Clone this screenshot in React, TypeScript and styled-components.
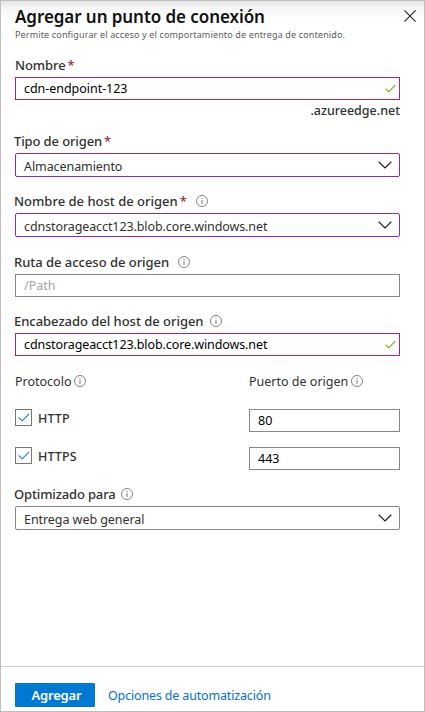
import React from 'react';
import styled, { createGlobalStyle } from 'styled-components';

const Global = createGlobalStyle`
  * { box-sizing: border-box; }
  body { margin: 0; background: #fff; font-family: "Noto Sans", "Open Sans", sans-serif; color: #323130; }
  button, input { font-family: inherit; }
`;

const Panel = styled.div`
  width: 425px;
  height: 712px;
  display: flex;
  flex-direction: column;
  border: 1px solid #bfbfbf;
  background: linear-gradient(#e6e6e6 0, #f5f5f5 7px, #fff 18px);
`;

const Header = styled.header`
  display: flex;
  justify-content: space-between;
  padding: 4px 8px 0 14px;
  height: 40px;
`;

const Title = styled.h1`
  margin: 0;
  font-size: 17px;
  font-weight: 600;
  line-height: 24px;
  letter-spacing: -0.07px;
  color: #111;
  white-space: nowrap;
`;

const Subtitle = styled.p`
  margin: 0;
  font-size: 9px;
  line-height: 12px;
  letter-spacing: 0.15px;
  color: #5c5c5c;
  white-space: nowrap;
`;

const CloseButton = styled.button`
  width: 12px;
  height: 12px;
  margin-top: 5px;
  padding: 0;
  border: 0;
  background: none;
  svg { display: block; }
`;

const Form = styled.main`
  flex: 1;
  padding: 14px 24px 0 14px;
`;

const Field = styled.section<{ $top?: number }>`
  margin-top: ${p => p.$top ?? 0}px;
`;

const Label = styled.div<{ $shift?: number; $spacing?: number }>`
  display: flex;
  align-items: center;
  height: 20px;
  margin-left: ${p => p.$shift ?? -1}px;
  font-size: 13px;
  font-weight: 500;
  line-height: 20px;
  letter-spacing: ${p => p.$spacing ?? 0}px;
  white-space: nowrap;
`;

const Required = styled.span`
  margin-left: 2px;
  color: #a4262c;
`;

const InfoSvg = styled.svg<{ $gap: number }>`
  flex: none;
  margin-left: ${p => p.$gap}px;
`;

const Control = styled.div<{ $accent?: boolean; $select?: boolean }>`
  display: flex;
  align-items: center;
  justify-content: space-between;
  height: ${p => (p.$select ? 24 : 23)}px;
  margin-top: 2px;
  padding: 0 ${p => (p.$select ? 7 : 3)}px 0 8px;
  border: 1px solid ${p => (p.$accent ? '#8a2da5' : '#8a8886')};
  border-radius: ${p => (p.$select ? 2 : 0)}px;
  background: #fff;
`;

const Value = styled.span<{ $select?: boolean; $spacing?: number }>`
  margin-top: ${p => (p.$select ? 3 : 0)}px;
  font-size: 12.5px;
  line-height: 20px;
  letter-spacing: ${p => p.$spacing ?? 0}px;
  color: ${p => (p.$select ? '#323130' : '#000')};
  white-space: nowrap;
`;

const TextInput = styled.input`
  width: 100%;
  height: 21px;
  padding: 0;
  border: 0;
  outline: 0;
  background: none;
  font-size: 12.5px;
  color: #000;
  &::placeholder { color: #a6a6a6; opacity: 1; }
`;

const Suffix = styled.div`
  height: 20px;
  text-align: right;
  font-size: 12.5px;
  font-weight: 500;
  line-height: 22px;
`;

const Columns = styled.section`
  display: grid;
  grid-template-columns: 234px 151px;
  row-gap: 15px;
  margin-top: 15px;
`;

const ColumnLabel = styled(Label)`
  margin-bottom: 3px;
  font-size: 12.5px;
  font-weight: 400;
`;

const ColumnText = styled.span`
  line-height: 20px;
  padding-top: 1px;
`;

const PortBox = styled(Control)`
  margin-top: 0;
`;

const CheckRow = styled.label`
  display: flex;
  align-items: flex-start;
  gap: 6px;
  font-size: 12.5px;
  font-weight: 500;
  line-height: 19px;
  letter-spacing: 0.1px;
`;

const CheckBox = styled.span`
  display: flex;
  align-items: center;
  justify-content: center;
  width: 17px;
  height: 17px;
  border: 1px solid #77757a;
`;

const Footer = styled.footer`
  display: flex;
  align-items: center;
  gap: 13px;
  height: 45px;
  padding: 12px 14px 0;
  border-top: 1px solid #cfcfcf;
`;

const Primary = styled.button`
  width: 80px;
  height: 24px;
  padding: 0 0 1px 3px;
  border: 0;
  border-radius: 1px;
  background: #0078d4;
  color: #fff;
  font-size: 13px;
  font-weight: 600;
  line-height: 22px;
  letter-spacing: -0.2px;
`;

const Link = styled.a`
  color: #0a70c8;
  font-size: 12.5px;
  line-height: 20px;
  letter-spacing: -0.16px;
  padding-top: 1px;
`;

const Info = ({ gap }: { gap: number }) => (
  <InfoSvg $gap={gap} width="12" height="12" viewBox="0 0 12 12" fill="none" stroke="#77757a">
    <circle cx="6" cy="6" r="5.5" strokeWidth="0.9" />
    <path d="M6 5v4M6 3v1" strokeWidth="1" />
  </InfoSvg>
);

const Chevron = () => (
  <svg width="14" height="8" viewBox="0 0 14 8" fill="none" stroke="#201f1e" strokeWidth="1.2">
    <path d="M.7.8 7 7 13.3.8" />
  </svg>
);

const Valid = () => (
  <svg width="11" height="9" viewBox="0 0 11 9" fill="none" stroke="#7fb640" strokeWidth="1.2">
    <path d="M.5 4.6 3.8 7.8 10.3 1" />
  </svg>
);

const Tick = () => (
  <svg width="12" height="9" viewBox="0 0 12 9" fill="none" stroke="#1a73e0" strokeWidth="1.1">
    <path d="M.7 4.3 4.2 7.8 11.2.8" />
  </svg>
);

export default function App() {
  return (
    <>
      <Global />
      <Panel>
        <Header>
          <div>
            <Title>Agregar un punto de conexión</Title>
            <Subtitle>Permite configurar el acceso y el comportamiento de entrega de contenido.</Subtitle>
          </div>
          <CloseButton aria-label="Cerrar">
            <svg width="12" height="12" viewBox="0 0 12 12" stroke="#222" strokeWidth="1.1">
              <path d="M.4.4 11.6 11.6M11.6.4.4 11.6" />
            </svg>
          </CloseButton>
        </Header>
        <Form>
          <Field>
            <Label $shift={0} $spacing={-0.1}>Nombre<Required>*</Required></Label>
            <Control $accent><Value $spacing={-0.04}>cdn-endpoint-123</Value><Valid /></Control>
            <Suffix>.azureedge.net</Suffix>
          </Field>
          <Field $top={11}>
            <Label $spacing={-0.12}>Tipo de origen<Required>*</Required></Label>
            <Control $accent $select><Value $select $spacing={-0.08}>Almacenamiento</Value><Chevron /></Control>
          </Field>
          <Field $top={14}>
            <Label>Nombre de host de origen<Required>*</Required><Info gap={9} /></Label>
            <Control $accent $select>
              <Value $select $spacing={-0.095}>cdnstorageacct123.blob.core.windows.net</Value><Chevron />
            </Control>
          </Field>
          <Field $top={15}>
            <Label $spacing={-0.03}>Ruta de acceso de origen<Info gap={8.5} /></Label>
            <Control><TextInput placeholder="/Path" /></Control>
          </Field>
          <Field $top={14}>
            <Label $spacing={-0.03}>Encabezado del host de origen<Info gap={6.5} /></Label>
            <Control $accent><Value $spacing={-0.095}>cdnstorageacct123.blob.core.windows.net</Value><Valid /></Control>
          </Field>
          <Columns>
            <ColumnLabel $shift={0}><ColumnText>Protocolo</ColumnText><Info gap={3} /></ColumnLabel>
            <ColumnLabel $shift={0}><ColumnText>Puerto de origen</ColumnText><Info gap={2.5} /></ColumnLabel>
            <CheckRow><CheckBox><Tick /></CheckBox>HTTP</CheckRow>
            <PortBox><TextInput defaultValue="80" /></PortBox>
            <CheckRow><CheckBox><Tick /></CheckBox>HTTPS</CheckRow>
            <PortBox><TextInput defaultValue="443" /></PortBox>
          </Columns>
          <Field $top={14}>
            <Label $spacing={-0.15}>Optimizado para<Info gap={5.5} /></Label>
            <Control $select><Value $select $spacing={-0.06}>Entrega web general</Value><Chevron /></Control>
          </Field>
        </Form>
        <Footer>
          <Primary>Agregar</Primary>
          <Link>Opciones de automatización</Link>
        </Footer>
      </Panel>
    </>
  );
}
